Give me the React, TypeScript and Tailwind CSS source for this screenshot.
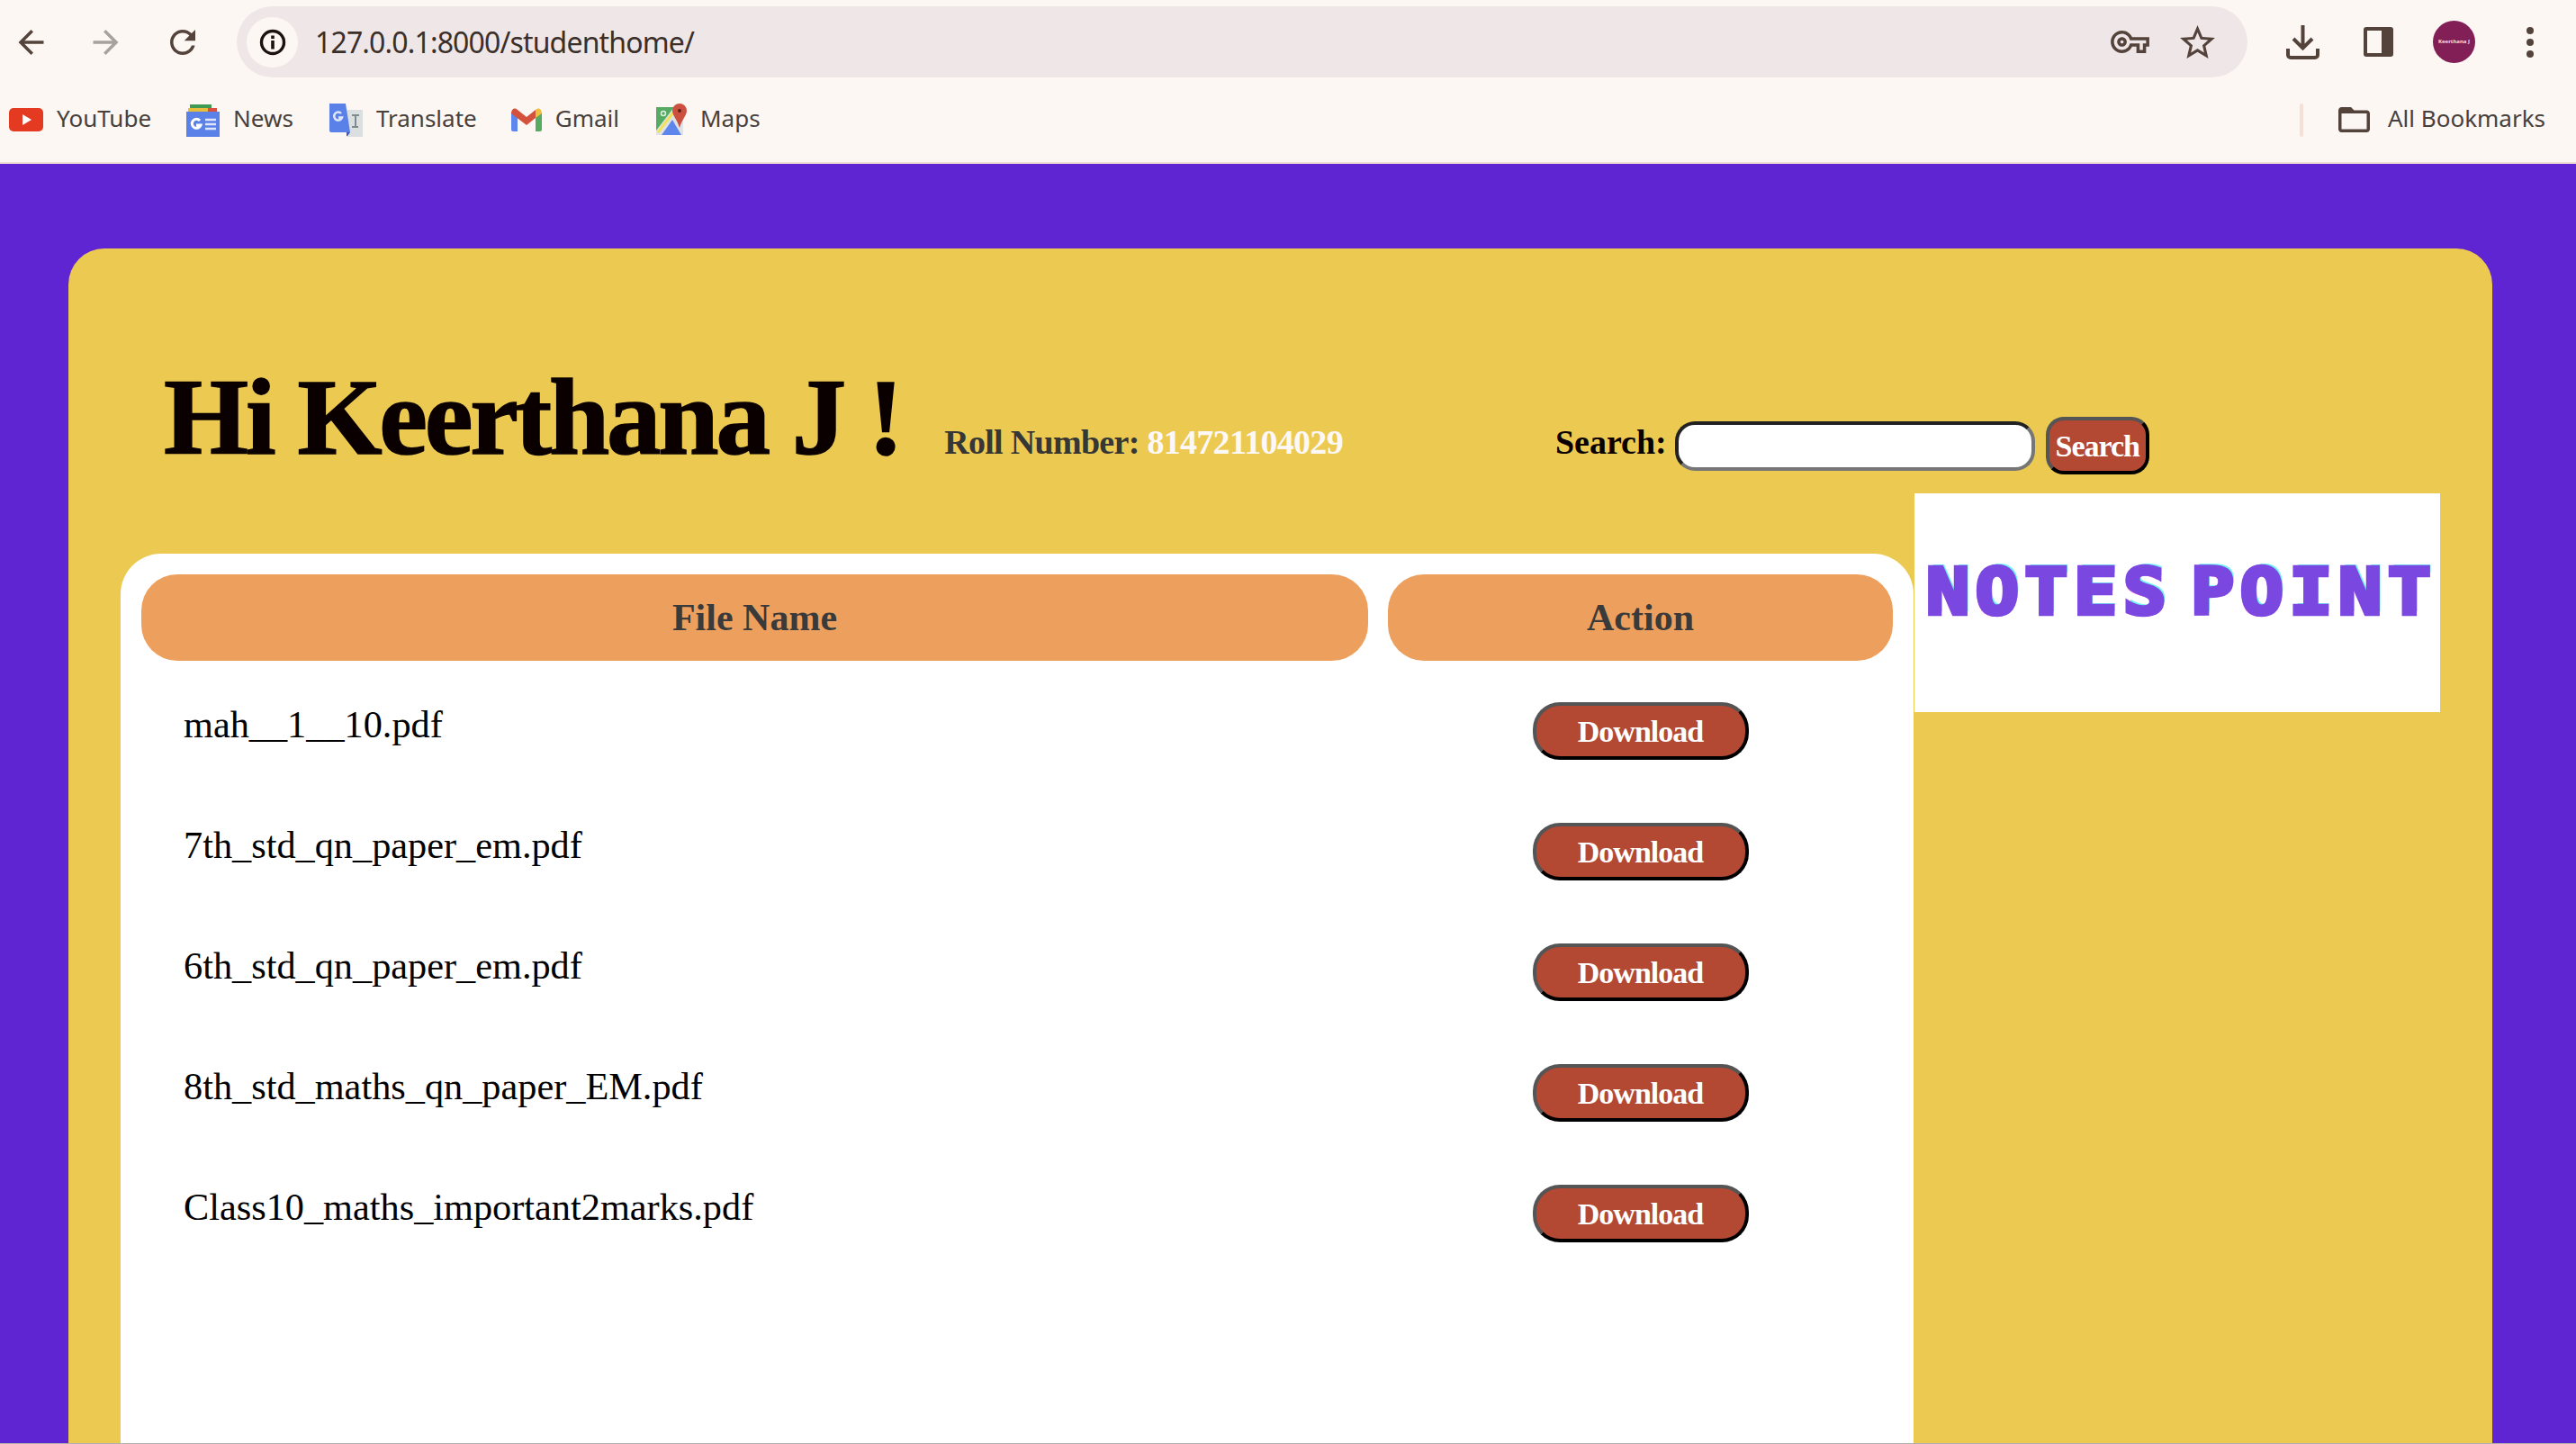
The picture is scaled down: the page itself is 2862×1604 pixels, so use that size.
const files = [
  'mah__1__10.pdf',
  '7th_std_qn_paper_em.pdf',
  '6th_std_qn_paper_em.pdf',
  '8th_std_maths_qn_paper_EM.pdf',
  'Class10_maths_important2marks.pdf',
];

const serif = 'font-["Liberation_Serif",serif]';

function YouTubeIcon() {
  return (
    <svg width="38" height="26" viewBox="0 0 38 26" aria-hidden="true">
      <rect width="38" height="26" rx="5" fill="#e53a22" />
      <path d="M15 7l10 6-10 6z" fill="#fff" />
    </svg>
  );
}

function NewsIcon() {
  return (
    <svg width="37" height="37" viewBox="0 0 37 37" aria-hidden="true">
      <path d="M4 1h24v8H4z" fill="#3f9b52" />
      <path d="M2 5h22v6H2z" fill="#e8bd3c" />
      <path d="M24 5h10v7H24z" fill="#d9503f" />
      <rect y="9" width="37" height="28" fill="#5a81e8" />
      <path d="M15 19a5 5 0 1 0 1 5h-5" fill="none" stroke="#fff" strokeWidth="3" />
      <path d="M21 18h12M21 23h12M21 28h12" stroke="#dfe6fa" strokeWidth="2.5" />
    </svg>
  );
}

function TranslateIcon() {
  return (
    <svg width="37" height="37" viewBox="0 0 37 37" aria-hidden="true">
      <rect x="19" y="7" width="18" height="30" fill="#dcdfe0" />
      <path d="M25 13h8M29 13v13M25 26h7" stroke="#7d8b90" strokeWidth="2" fill="none" />
      <path d="M0 0h18l5 32H2a2 2 0 0 1-2-2z" fill="#5a81e8" />
      <path d="M19 32h4l-3 4h-1z" fill="#3f56c0" />
      <path d="M13 11a4.500 4.500 0 1 0 1 4.500h-4" fill="none" stroke="#dfe6fa" strokeWidth="2.5" />
    </svg>
  );
}

function GmailIcon() {
  return (
    <svg width="34" height="26" viewBox="0 0 34 26" aria-hidden="true">
      <path d="M0 5h7v21H2a2 2 0 0 1-2-2z" fill="#5f86ec" />
      <path d="M27 5h7v19a2 2 0 0 1-2 2h-5z" fill="#55ab62" />
      <path d="M0 6C0 1 4-1 7 2l10 8 10-8v9l-10 8L0 6z" fill="#d4523c" />
      <path d="M27 2c3-3 7-1 7 4l-7 5z" fill="#efc03e" />
    </svg>
  );
}

function MapsIcon() {
  return (
    <svg width="34" height="37" viewBox="0 0 34 37" aria-hidden="true">
      <rect y="4" width="30" height="31" fill="#dfe3e6" />
      <path d="M0 4h20L0 30z" fill="#55ab62" />
      <path d="M2 32l17-22" stroke="#efe25a" strokeWidth="3" />
      <path d="M6 35l12-17 10 17z" fill="#5f86ec" />
      <path d="M26 0a8 8 0 0 1 8 8c0 5-5 9-8 19-3-10-8-14-8-19a8 8 0 0 1 8-8z" fill="#cc5040" />
      <circle cx="26" cy="8" r="2" fill="#5b2018" />
      <circle cx="8" cy="11" r="2.500" fill="none" stroke="#dff0e2" strokeWidth="1.500" />
    </svg>
  );
}

function Bookmark({ icon, label, className }: { icon: React.ReactNode; label: string; className: string }) {
  return (
    <div className={`flex items-center ${className}`}>
      {icon}
      <span className="ml-[15px] mb-[3px] text-[26px] text-[#47403c]">{label}</span>
    </div>
  );
}

function BrowserBar() {
  return (
    <div className={'bg-[#fdf7f4] border-b-2 border-[#f3ded6] h-[182px] font-["Noto_Sans",sans-serif]'}>
      <div className="flex items-center h-[93px] pl-5 pr-[47px]">
        <svg className="w-[29px] h-[28px]" viewBox="4 4 16 16" fill="#54433b" aria-hidden="true">
          <path d="M20 11H7.830l5.590-5.590L12 4l-8 8 8 8 1.410-1.410L7.830 13H20v-2z" />
        </svg>
        <svg className="w-[29px] h-[28px] ml-[54px]" viewBox="4 4 16 16" fill="#a8a29e" aria-hidden="true">
          <path d="M12 4l-1.410 1.410L16.170 11H4v2h12.170l-5.580 5.590L12 20l8-8z" />
        </svg>
        <svg className="w-[30px] h-[28px] ml-[56px]" viewBox="4 4 16 16" fill="#54433b" aria-hidden="true">
          <path d="M17.650 6.350C16.200 4.900 14.210 4 12 4c-4.420 0-7.990 3.580-7.990 8s3.570 8 7.990 8c3.730 0 6.840-2.550 7.730-6h-2.080c-.820 2.330-3.040 4-5.650 4-3.310 0-6-2.690-6-6s2.690-6 6-6c1.660 0 3.140.690 4.220 1.780L13 11h7V4l-2.350 2.350z" />
        </svg>

        {/* address bar */}
        <div className="ml-[45px] w-[2234px] h-[79px] rounded-full bg-[#efe7e7] flex items-center pl-[11px] pr-[36px]">
          <div className="w-[57px] h-[56px] rounded-full bg-[#fdf7f4] flex items-center justify-center">
            <svg width="30" height="30" viewBox="0 0 30 30" aria-hidden="true">
              <circle cx="15" cy="15" r="12.500" fill="none" stroke="#1c1310" strokeWidth="3.400" />
              <rect x="13.200" y="13" width="3.600" height="9.500" fill="#1c1310" />
              <rect x="13.200" y="7.500" width="3.600" height="3.600" fill="#1c1310" />
            </svg>
          </div>
          <span className="ml-[19px] text-[32px] tracking-[-0.85px] text-[#3a2f2a]">127.0.0.1:8000/studenthome/</span>
          <svg className="ml-auto w-[43px] h-[25px]" viewBox="0 5 24 14" fill="#54433b" aria-hidden="true">
            <path d="M22 19h-6v-4h-2.680c-1.140 2.420-3.600 4-6.320 4-3.860 0-7-3.140-7-7s3.140-7 7-7c2.720 0 5.170 1.580 6.320 4H24v6h-2v4zm-4-2h2v-4h2v-2H11.940l-.230-.670C11.010 8.340 9.110 7 7 7c-2.760 0-5 2.240-5 5s2.240 5 5 5c2.110 0 4.010-1.340 4.710-3.330l.230-.670H18v4zM7 15c-1.650 0-3-1.350-3-3s1.350-3 3-3 3 1.350 3 3-1.350 3-3 3zm0-4c-.550 0-1 .450-1 1s.450 1 1 1 1-.450 1-1-.450-1-1-1z" />
          </svg>
          <svg className="ml-[34px] w-[39px] h-[37px]" viewBox="2 2 20 19" fill="#54433b" aria-hidden="true">
            <path d="M22 9.240l-7.190-.620L12 2 9.190 8.630 2 9.240l5.460 4.730L5.820 21 12 17.270 18.180 21l-1.630-7.030L22 9.240zM12 15.400l-3.760 2.270 1-4.280-3.320-2.880 4.380-.380L12 6.100l1.710 4.040 4.380.380-3.320 2.880 1 4.280L12 15.400z" />
          </svg>
        </div>

        <svg className="ml-[43px]" width="37" height="38" viewBox="0 0 37 38" fill="none" stroke="#54433b" strokeWidth="4" aria-hidden="true">
          <path d="M18.500 0v25M8 15l10.500 10.500L29 15" />
          <path d="M2 26v7a3 3 0 0 0 3 3h27a3 3 0 0 0 3-3v-7" />
        </svg>
        <svg className="ml-[49px]" width="33" height="33" viewBox="0 0 33 33" aria-hidden="true">
          <rect width="33" height="33" rx="3" fill="#54433b" />
          <rect x="4" y="4" width="16" height="25" fill="#fdf7f4" />
        </svg>
        <div className="ml-[44px] w-[47px] h-[47px] rounded-full bg-[#821f56] flex items-center justify-center">
          <span className="text-[6px] font-bold text-[#f3dfe9] whitespace-nowrap">Keerthana J</span>
        </div>
        <div className="ml-[57px] flex flex-col gap-[5px]">
          <span className="w-2 h-2 rounded-full bg-[#54433b]" />
          <span className="w-2 h-2 rounded-full bg-[#54433b]" />
          <span className="w-2 h-2 rounded-full bg-[#54433b]" />
        </div>
      </div>

      <div className="flex items-center h-[80px] pl-[10px]">
        <Bookmark icon={<YouTubeIcon />} label="YouTube" className="" />
        <Bookmark icon={<NewsIcon />} label="News" className="ml-[39px]" />
        <Bookmark icon={<TranslateIcon />} label="Translate" className="ml-[40px]" />
        <Bookmark icon={<GmailIcon />} label="Gmail" className="ml-[38px]" />
        <Bookmark icon={<MapsIcon />} label="Maps" className="ml-[41px]" />
        <div className="ml-auto w-1 h-[37px] rounded-sm bg-[#f5e0d8]" />
        <svg className="ml-[37px] w-[39px] h-[28px]" viewBox="2 4 20 16" fill="#54433b" aria-hidden="true">
          <path d="M20 6h-8l-2-2H4c-1.100 0-1.990.900-1.990 2L2 18c0 1.100.900 2 2 2h16c1.100 0 2-.900 2-2V8c0-1.100-.900-2-2-2zm0 12H4V8h16v10z" />
        </svg>
        <span className="ml-[18px] mr-[34px] mb-[3px] text-[26px] text-[#47403c]">All Bookmarks</span>
      </div>
    </div>
  );
}

function DownloadButton() {
  return (
    <button
      type="button"
      className="block mx-auto w-[240px] h-[64px] rounded-[30px] border-4 border-t-[#555] border-l-[#555] border-r-black border-b-black bg-[#b34833] text-white text-[34px] font-bold tracking-[-1px]"
    >
      Download
    </button>
  );
}

export default function App() {
  return (
    <div className="h-screen overflow-hidden flex flex-col bg-[#5f25d3] border-b border-[#b0b0b0]">
      <BrowserBar />

      <main className={`mt-[94px] ml-[76px] mr-[93px] flex-1 min-h-0 rounded-t-[40px] bg-[#ecca52] flex flex-col ${serif}`}>
        {/* greeting + search */}
        <header className="flex items-baseline h-[272px] pl-[106px]">
          <h1 className="mt-[122px] text-[121px] leading-[130px] font-bold tracking-[-3.2px] text-[#0a0000] [-webkit-text-stroke:1.5px_#0a0000] whitespace-nowrap">
            Hi Keerthana J !
          </h1>
          <p className="ml-[48px] text-[38px] font-bold tracking-[-0.7px] text-[#363636] whitespace-nowrap">
            Roll Number: <span className="text-[#fdf8f8]">814721104029</span>
          </p>
          <form className="ml-[236px] flex items-baseline">
            <label htmlFor="search" className="text-[38px] font-bold text-[#0a0000]">Search:</label>
            <input
              id="search"
              type="text"
              className="ml-[9px] w-[400px] h-[55px] rounded-[22px] bg-white border-4 border-t-[#222] border-l-[#222] border-r-[#767676] border-b-[#767676] self-center"
            />
            <button
              type="button"
              className="ml-[12px] w-[115px] h-[64px] rounded-[20px] border-4 border-t-[#555] border-l-[#555] border-r-black border-b-black bg-[#b34833] text-white text-[34px] font-bold tracking-[-1px] self-center"
            >
              Search
            </button>
          </form>
        </header>

        <div className="flex flex-1 min-h-0 pl-[58px]">
          {/* file list */}
          <section className="mt-[67px] w-[1992px] rounded-t-[45px] bg-white px-px pt-px">
            <table className="w-full table-fixed border-separate border-spacing-[22px]">
              <thead>
                <tr>
                  <th className="w-[1363px] h-[96px] rounded-[40px] bg-[#eda05e] text-[42px] font-bold text-[#3a3a3a]">File Name</th>
                  <th className="h-[96px] rounded-[40px] bg-[#eda05e] text-[42px] font-bold text-[#3a3a3a]">Action</th>
                </tr>
              </thead>
              <tbody>
                {files.map((name) => (
                  <tr key={name}>
                    <td className="align-top pt-[25px] pl-[47px] text-[42.300px] leading-[48px] text-black">{name}</td>
                    <td className="py-[24px]"><DownloadButton /></td>
                  </tr>
                ))}
              </tbody>
            </table>
          </section>

          {/* logo */}
          <div className="ml-px w-[584px] h-[243px] bg-white pt-[65px] pl-[13px] overflow-hidden">
            <span className={'block origin-bottom scale-y-[0.88] font-["DejaVu_Sans_Mono",monospace] font-bold text-[80px] leading-[80px] tracking-[6.500px] [word-spacing:-34px] text-[#7a48e0] [-webkit-text-stroke:5px_#7a48e0] [text-shadow:3px_-3px_0_#6ef0f5,-2px_3px_0_#ee66e8] whitespace-nowrap'}>
              NOTES POINT
            </span>
          </div>
        </div>
      </main>
    </div>
  );
}
